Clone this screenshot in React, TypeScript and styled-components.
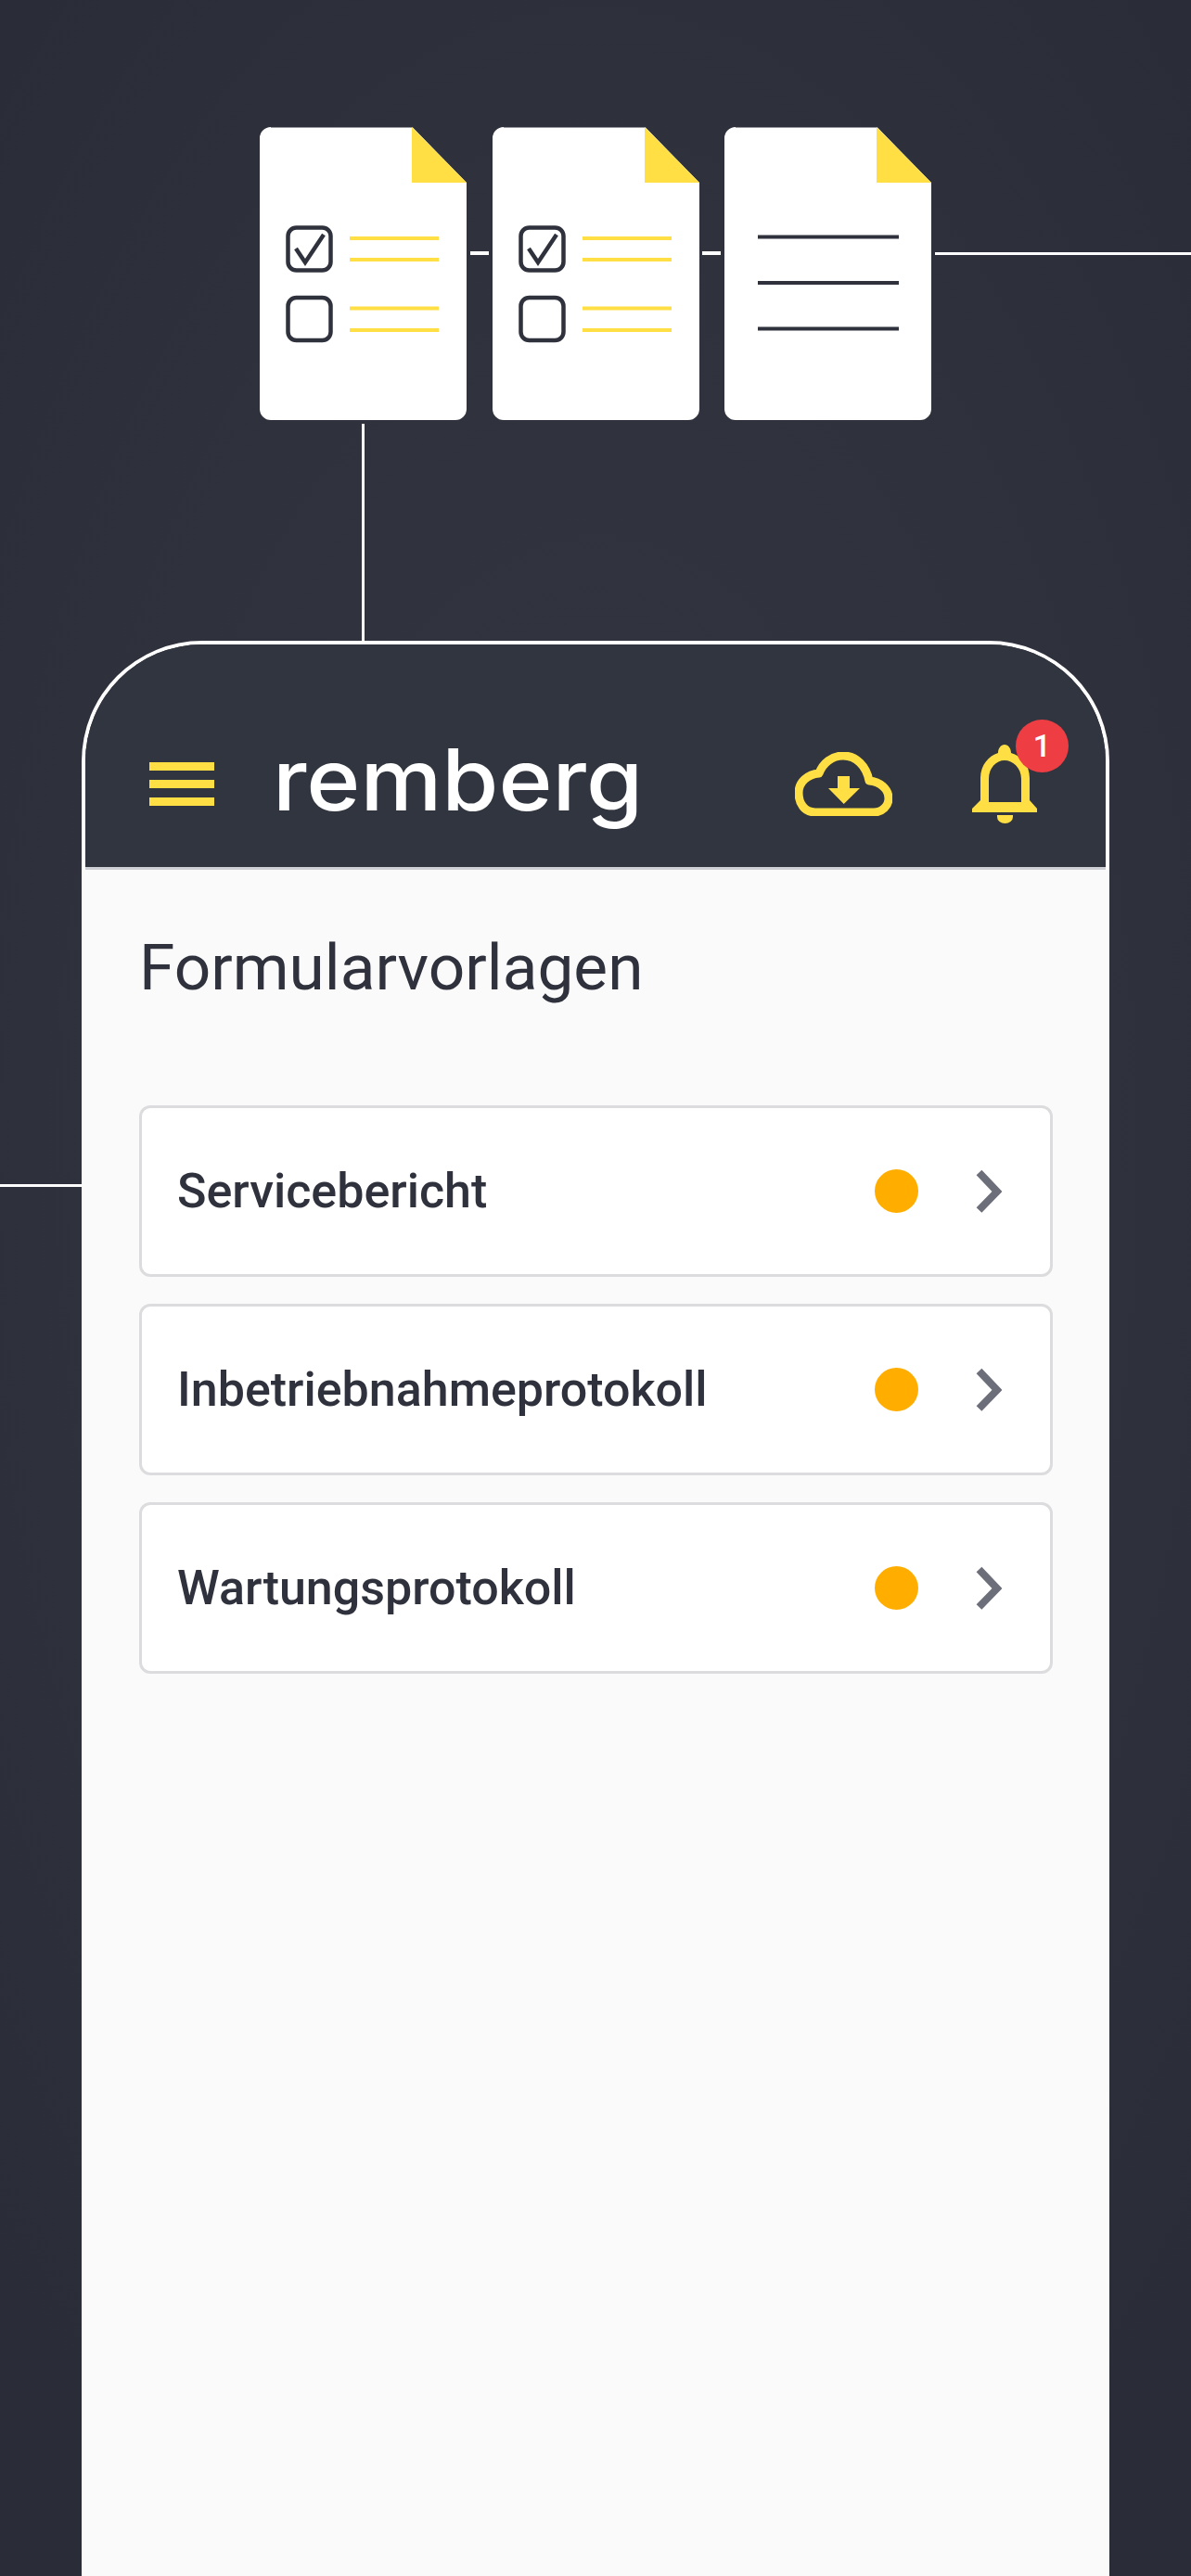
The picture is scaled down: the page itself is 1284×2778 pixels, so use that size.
import React from 'react';
import styled, { createGlobalStyle } from 'styled-components';

const templates = ['Servicebericht', 'Inbetriebnahmeprotokoll', 'Wartungsprotokoll'];

const DocSheet: React.FC<{ checklist?: boolean }> = ({ checklist }) => (
  <DocSvg viewBox="0 0 223 316">
    <path
      d="M12 0.5H165L223 60V304A12 12 0 0 1 211 316H12A12 12 0 0 1 0 304V12A12 12 0 0 1 12 0Z"
      fill="#fff"
    />
    <path d="M164 0L223 60H164Z" fill="#ffdf43" />
    {checklist ? (
      <>
        <rect x="30.5" y="108.5" width="46" height="46" rx="9" fill="none" stroke="#2f323d" strokeWidth="4.5" />
        <path d="M39 131L49 146L69 116" fill="none" stroke="#2f323d" strokeWidth="4.5" />
        <rect x="30.5" y="184" width="46" height="46" rx="9" fill="none" stroke="#2f323d" strokeWidth="4.5" />
        {[120, 143, 195.5, 219].map((y) => (
          <rect key={y} x="97" y={y - 2} width="96" height="4" fill="#ffdf43" />
        ))}
      </>
    ) : (
      [118.5, 168, 217.5].map((y) => (
        <rect key={y} x="36" y={y - 2} width="152" height="4" fill="#2f323d" />
      ))
    )}
  </DocSvg>
);

const App: React.FC = () => (
  <Page>
    <GlobalStyle />
    <DocRow>
      <DocSheet checklist />
      <Dash />
      <DocSheet checklist />
      <Dash />
      <DocSheet />
      <TrailingDash />
    </DocRow>
    <DropLine />
    <Phone>
      <Header>
        <Burger>
          <span />
          <span />
          <span />
        </Burger>
        <Logo>remberg</Logo>
        <CloudIcon viewBox="0 0 105 69">
          <path
            d="M22 65C10 65 4 55 4 44C4 32 14 24 26 23C30 12 40 4 52 4C66 4 77 15 80 31C92 32 101 40 101 50C101 58 94 65 85 65Z"
            fill="none"
            stroke="#ffdf43"
            strokeWidth="9"
            strokeLinejoin="round"
          />
          <path d="M46 26H59V39H70L52.7 56L36 39H46Z" fill="#ffdf43" />
        </CloudIcon>
        <BellWrap>
          <svg viewBox="0 0 70 85" width="70" height="85">
            <path
              fillRule="evenodd"
              fill="#ffdf43"
              d="M35 0C39 0 42 4 42 9C53 12 62 22 62 36V60L70 69V73H0V69L9 60V36C9 22 18 12 28 9C28 4 31 0 35 0ZM35 17C26 17 18 25 18 37V62H53V37C53 25 44 17 35 17Z"
            />
            <path d="M27 76H44V78A8.5 7 0 0 1 27 78Z" fill="#ffdf43" />
          </svg>
          <Badge>1</Badge>
        </BellWrap>
      </Header>
      <Content>
        <Title>Formularvorlagen</Title>
        <List>
          {templates.map((name) => (
            <Row key={name}>
              <RowName>{name}</RowName>
              <StatusDot />
              <ChevronIcon viewBox="0 0 28 47">
                <path d="M3.5 3.5L23 24L3.5 44" fill="none" stroke="#6c6f7a" strokeWidth="8" />
              </ChevronIcon>
            </Row>
          ))}
        </List>
      </Content>
    </Phone>
  </Page>
);

const GlobalStyle = createGlobalStyle`
  html, body {
    margin: 0;
    padding: 0;
    background: #2c2f3a;
  }
`;

const Page = styled.div`
  position: relative;
  width: 1284px;
  height: 2778px;
  overflow: hidden;
  padding-top: 137px;
  box-sizing: border-box;
  background: radial-gradient(ellipse 900px 1700px at 50% 45%, #333641 0%, #2f323d 60%, #2a2d38 100%);
  font-family: Roboto, "Liberation Sans", sans-serif;
`;

const DocRow = styled.div`
  display: flex;
  align-items: flex-start;
  padding-left: 280px;
`;

const DocSvg = styled.svg`
  display: block;
  flex: none;
  width: 223px;
  height: 316px;
`;

const Dash = styled.div`
  flex: none;
  width: 20px;
  height: 4px;
  margin: 134px 3.75px 0;
  background: #fff;
`;

const TrailingDash = styled.div`
  flex: 1;
  height: 3px;
  margin: 135px 0 0 4px;
  background: #fff;
`;

const DropLine = styled.div`
  width: 3px;
  height: 234px;
  margin: 4px 0 0 390px;
  background: #fff;
`;

const Phone = styled.div`
  position: relative;
  box-sizing: border-box;
  width: 1108px;
  height: 2088px;
  margin-left: 88px;
  border: 4px solid #fff;
  border-bottom: none;
  border-radius: 130px 130px 0 0;
  display: flex;
  flex-direction: column;

  &::before {
    content: '';
    position: absolute;
    left: -92px;
    top: 582px;
    width: 88px;
    height: 3px;
    background: #fff;
  }
`;

const Header = styled.header`
  flex: none;
  box-sizing: border-box;
  height: 243px;
  padding: 61px 0 0 69px;
  display: flex;
  align-items: center;
  background: #313540;
  border-radius: 126px 126px 0 0;
  border-bottom: 3px solid #cfd0d5;
`;

const Burger = styled.div`
  display: flex;
  flex-direction: column;
  gap: 10px;
  width: 70px;

  span {
    display: block;
    height: 9px;
    background: #ffdf43;
  }
`;

const Logo = styled.div`
  width: 396px;
  margin: -10px 0 0 63px;
  font-family: Inter, "Liberation Sans", sans-serif;
  font-size: 92px;
  font-weight: 500;
  line-height: 92px;
  color: #fff;
  transform: scaleX(1.075);
  transform-origin: left center;
`;

const CloudIcon = styled.svg`
  flex: none;
  width: 105px;
  height: 69px;
  margin-left: 167px;
`;

const BellWrap = styled.div`
  position: relative;
  flex: none;
  width: 70px;
  height: 85px;
  margin-left: 86px;

  svg {
    display: block;
  }
`;

const Badge = styled.div`
  position: absolute;
  left: 47px;
  top: -27px;
  width: 57px;
  height: 57px;
  border-radius: 50%;
  background: #ee3e44;
  color: #fff;
  font-size: 34px;
  font-weight: 500;
  line-height: 57px;
  text-align: center;
`;

const Content = styled.main`
  flex: 1;
  padding: 0 61px 0 62px;
  margin: 0 -4px;
  background: #fafafa;
`;

const Title = styled.h1`
  margin: 66px 0 0;
  font-size: 69.4px;
  font-weight: 400;
  line-height: 80px;
  color: #2f323d;
`;

const List = styled.div`
  display: flex;
  flex-direction: column;
  gap: 29px;
  margin-top: 108px;
`;

const Row = styled.div`
  box-sizing: border-box;
  height: 185px;
  padding: 0 52px 0 38px;
  display: flex;
  align-items: center;
  background: #fff;
  border: 3px solid #dcdcde;
  border-radius: 12px;
`;

const RowName = styled.div`
  flex: 1;
  font-size: 52px;
  font-weight: 500;
  color: #2f323d;
`;

const StatusDot = styled.div`
  flex: none;
  width: 47px;
  height: 47px;
  border-radius: 50%;
  background: #ffae00;
`;

const ChevronIcon = styled.svg`
  flex: none;
  width: 28px;
  height: 47px;
  margin-left: 62px;
`;

export default App;
